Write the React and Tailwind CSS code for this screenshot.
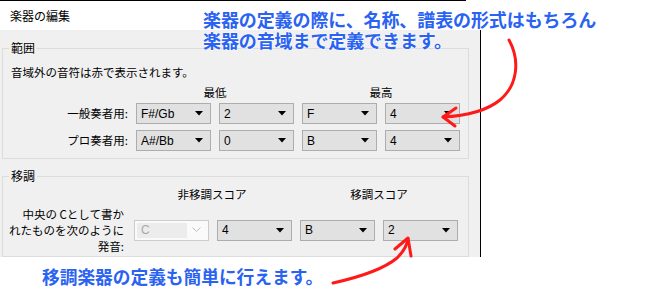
import React from 'react';

const ui = { fontFamily: '"Noto Sans CJK JP", "Noto Sans", sans-serif' };
const latin = { fontFamily: '"Liberation Sans", "Noto Sans CJK JP", sans-serif' };

const Select = ({ value, w = 'w-[75px]' }) => (
  <div
    className={`${w} h-[21px] flex items-center justify-between bg-[#e1e1e1] border border-[#adadad] pl-[4px] pr-[7px] text-[12px] text-black`}
    style={latin}
  >
    <span>{value}</span>
    <svg width="8" height="5" viewBox="0 0 8 5">
      <path d="M0 0 H8 L4 4.5 Z" fill="#000" />
    </svg>
  </div>
);

const DisabledSelect = () => (
  <div className="w-[75px] h-[21px] flex items-center bg-[#fafafa] border border-[#cccccc] p-[2px] text-[12px]" style={latin}>
    <div className="flex-1 h-full bg-[#ececec] flex items-center pl-[4px] text-[#a8a8a8]">C</div>
    <svg className="mx-[5px]" width="9" height="6" viewBox="0 0 9 6">
      <path d="M0.5 0.5 L4.5 4.5 L8.5 0.5" fill="none" stroke="#bdbdbd" strokeWidth="1" />
    </svg>
  </div>
);

const Group = ({ title, children, className = '' }) => (
  <fieldset className={`ml-[2px] w-[467px] border border-[#dcdcdc] ${className}`}>
    <legend className="ml-[6px] px-[2px] leading-[16px] text-[12px] text-black">{title}</legend>
    {children}
  </fieldset>
);

export default function App() {
  return (
    <div className="relative w-[660px] h-[300px] bg-white overflow-hidden" style={ui}>
      {/* dialog */}
      <div className="w-[481px] border-r border-black">
        <div className="h-[30px] bg-white border-t border-black flex items-center pl-[10px] text-[12px] text-black">
          楽器の編集
        </div>
        <div className="bg-[#f0f0f0] pt-[10px] h-[227px] flex flex-col text-[11.5px] text-black">
          <Group title="範囲">
            <div className="pl-[8px] mt-[8px] leading-[16px]">音域外の音符は赤で表示されます。</div>
            <div className="grid grid-cols-[125px_158px_158px] gap-x-[8px] mt-[4px]">
              <div />
              <div className="text-center leading-[16px]">最低</div>
              <div className="text-center leading-[16px]">最高</div>
            </div>
            <div className="flex flex-col gap-[6px] mt-[3px] pb-[7px]">
              {[
                ['一般奏者用:', 'F#/Gb', '2', 'F', '4'],
                ['プロ奏者用:', 'A#/Bb', '0', 'B', '4'],
              ].map((r) => (
                <div key={r[0]} className="flex items-center gap-[8px]">
                  <div className="w-[125px] text-right">{r[0]}</div>
                  <Select value={r[1]} />
                  <Select value={r[2]} />
                  <Select value={r[3]} />
                  <Select value={r[4]} />
                </div>
              ))}
            </div>
          </Group>

          <Group title="移調" className="mt-[9px] flex-1">
            <div className="grid grid-cols-[121px_158px_158px] gap-x-[9px] mt-[2px]">
              <div />
              <div className="text-center leading-[16px]">非移調スコア</div>
              <div className="text-center leading-[16px]">移調スコア</div>
            </div>
            <div className="flex items-center mt-[4px]">
              <div className="w-[121px] text-right leading-[16px]">
                中央の Cとして書か
                <br />
                れたものを次のように
                <br />
                発音:
              </div>
              <div className="ml-[10px] flex gap-[8px]">
                <DisabledSelect />
                <Select value="4" />
                <Select value="B" />
                <Select value="2" />
              </div>
            </div>
          </Group>
        </div>
      </div>

      {/* annotations */}
      <div className="absolute left-[466px] top-0 w-[20px] h-[30px] bg-white" />
      <div
        className="absolute left-[203px] top-[9px] text-[18px] leading-[21px] font-bold text-[#2a62f2] tracking-[-0.1px]"
        style={{ textShadow: '0 0 2px #fff, 0 0 2px #fff' }}
      >
        <div>楽器の定義の際に、名称、譜表の形式はもちろん</div>
        <div>楽器の音域まで定義できます。</div>
      </div>
      <div
        className="absolute left-[42px] top-[266px] text-[17.7px] leading-[21px] font-bold text-[#2a62f2]"
      >
        移調楽器の定義も簡単に行えます。
      </div>

      <svg className="absolute left-0 top-0 pointer-events-none" width="660" height="300">
        <g fill="none" stroke="#ff1a1a" strokeWidth="3" strokeLinecap="round" strokeLinejoin="round">
          <path d="M509 40 C520 60 518 85 500 100 C485 112 465 116 443 117" />
          <path d="M456 108 L443 117 L455 126" />
          <path d="M333 283 C360 277 385 268 397 258 C403 252 407 246 408 239" />
          <path d="M395 249 L408 238 L411 256" />
        </g>
      </svg>
    </div>
  );
}
